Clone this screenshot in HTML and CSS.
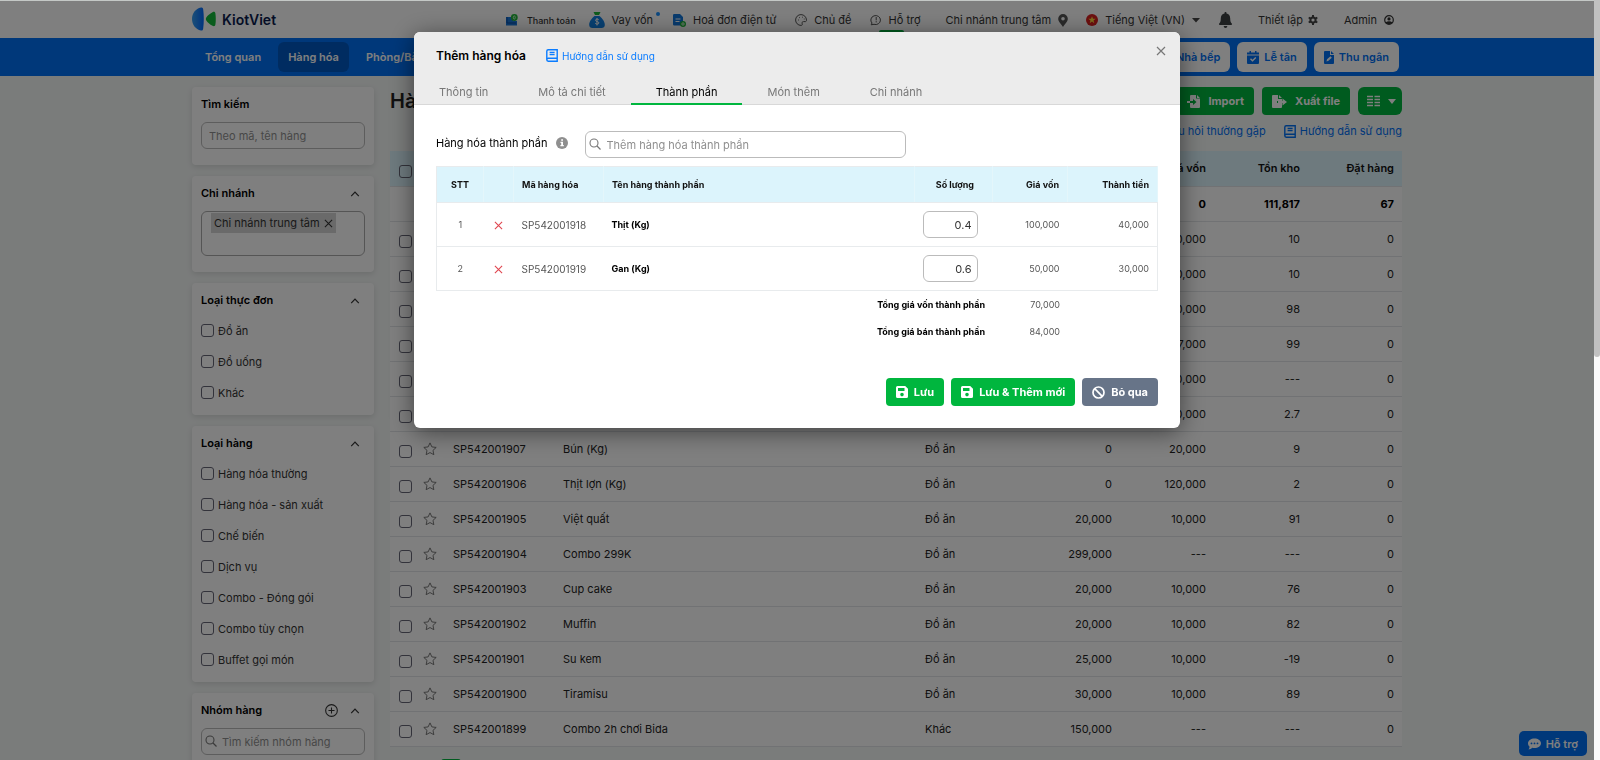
FILE: index.html
```html
<!DOCTYPE html>
<html lang="vi">
<head>
<meta charset="UTF-8">
<meta name="viewport" content="width=device-width, initial-scale=1.0">
<title>KiotViet - Hàng hóa</title>
<link rel="stylesheet" href="styles.css">
</head>
<body>

<!-- shared icons -->
<svg class="sprite" aria-hidden="true">
  <symbol id="i-star" viewBox="0 0 24 24"><path d="M12 1.5l3.2 6.9 7.4.9-5.5 5.1 1.5 7.4L12 18.1l-6.6 3.7 1.5-7.4L1.4 9.300l7.400-.9z" fill="none" stroke="currentColor" stroke-width="1.700" stroke-linejoin="round"/></symbol>
  <symbol id="i-up" viewBox="0 0 10 10"><path d="M1.200 7.200L5 3.200l3.800 4" fill="none" stroke="currentColor" stroke-width="1.200"/></symbol>
  <symbol id="i-x" viewBox="0 0 10 10"><path d="M1 1l8 8M9 1L1 9" fill="none" stroke="currentColor" stroke-width="1.200"/></symbol>
  <symbol id="i-search" viewBox="0 0 12 12"><circle cx="5" cy="5" r="4" fill="none" stroke="currentColor" stroke-width="1.100"/><path d="M8 8l3.500 3.500" stroke="currentColor" stroke-width="1.300"/></symbol>
  <symbol id="i-book" viewBox="0 0 12 13"><path d="M2.200.8h9v11.400h-9A1.400 1.400 0 0 1 .8 10.800V2.200A1.400 1.400 0 0 1 2.200.8zM.8 10.600a1.400 1.400 0 0 1 1.400-1.300h9M3.600 3.500h5M3.600 5.600h5" fill="none" stroke="currentColor" stroke-width="1.400"/></symbol>
  <symbol id="i-save" viewBox="0 0 12 12"><path fill="currentColor" fill-rule="evenodd" d="M1.500 0h7.700L12 2.800v7.700a1.500 1.500 0 0 1-1.500 1.500h-9A1.500 1.500 0 0 1 0 10.500v-9A1.500 1.500 0 0 1 1.500 0zM2 2v3h6.500V2zM6 6.800a1.800 1.800 0 1 0 0 3.600 1.800 1.800 0 0 0 0-3.600z"/></symbol>
</svg>

<div class="page">
  <header class="topbar">
    <div class="wrap topbar-inner">
      <a class="logo" href="#">
        <svg width="24" height="24" viewBox="0 0 24 24">
          <defs><linearGradient id="lg" x1="0" x2="1"><stop offset="0" stop-color="#3aa0f0"/><stop offset="1" stop-color="#0068ff"/></linearGradient></defs>
          <path d="M9 .5c1.500-.3 2 .5 2.200 2 .8 6 .8 13 0 19-.2 1.500-.7 2.300-2.200 2C3.500 22.500 0 17.500 0 12S3.500 1.500 9 .5z" fill="url(#lg)"/>
          <path d="M20.500 5.200c1.600-.8 2.700-.2 2.900 1.200.5 3.500.5 7.700 0 11.200-.2 1.400-1.300 2-2.900 1.200-2.700-1.400-5-3.300-6.200-5.300-.6-1-.6-2 0-3 1.200-2 3.500-3.900 6.200-5.300z" fill="#12b83a"/>
        </svg>
        <span>KiotViet</span>
      </a>
      <div class="top-links">
        <div class="top-group group-apps">
          <a class="small" href="#">
            <svg width="12" height="12" viewBox="0 0 12 12"><path d="M0 3h7v4h4v4.500H0z" fill="#1a7be0"/><path d="M1 3v6h9" stroke="#0b4fa8" fill="none"/><circle cx="8.300" cy="3.500" r="3.400" fill="#1fb83a"/><ellipse cx="8.300" cy="3.500" rx="1" ry="1.600" fill="none" stroke="#e0ffe5" stroke-width=".8"/></svg>
            Thanh toán
          </a>
          <a href="#">
            <svg width="16" height="16" viewBox="0 0 16 16"><path d="M4.500 0h7L10 3H6z" fill="#1fb83a"/><path d="M5.500 4h5c3 2.500 5.500 6 5.300 9 0 2-1.300 3-3.300 3h-9c-2 0-3.300-1-3.300-3C0 10 2.500 6.500 5.500 4z" fill="#1182e6"/><path d="M9.800 7.800C9.400 6.900 6.500 6.700 6.500 8.300c0 1.700 3.400.8 3.400 2.600 0 1.600-3.200 1.500-3.700.4M8 6v7.500" stroke="#fff" fill="none"/></svg>
            Vay vốn<i class="dot"></i>
          </a>
          <a href="#">
            <svg width="13" height="13" viewBox="0 0 13 13"><path d="M1.500 0h5.500l3 3v8.500H1.500A1.300 1.300 0 0 1 0 10.300V1.300A1.300 1.300 0 0 1 1.500 0z" fill="#1277dd"/><path d="M2.500 5h5M2.500 7.500h4" stroke="#fff"/><circle cx="10" cy="10" r="3" fill="#1fb83a"/><circle cx="10" cy="10" r="1.200" fill="none" stroke="#fff" stroke-width=".8"/></svg>
            Hoá đơn điện tử
          </a>
        </div>
        <div class="top-group">
          <a href="#">
            <svg width="12" height="12" viewBox="0 0 12 12" fill="none" stroke="#555"><path d="M6 .6a5.400 5.400 0 1 0 0 10.800c1.300 0 1.500-.8 1.200-1.600C6.700 8.500 7.300 7.600 8.500 7.600h1.800c.8 0 1.200-.6 1.200-1.500C11.400 3 9 .6 6 .6z"/><path d="M3 6h.8M4 3.600h.8M7 3.200h.8M8.800 5h.8"/></svg>
            Chủ đề
          </a>
          <a href="#">
            <svg width="12" height="12" viewBox="0 0 12 12" fill="none" stroke="#555"><path d="M1.200 10.800L2 9A4.800 4.500 0 1 1 4 10.300z"/><path d="M6.200 3v3.300M6.200 7.200v1.200"/></svg>
            Hỗ trợ<i class="tag"></i>
          </a>
          <a href="#">
            Chi nhánh trung tâm
            <svg width="10" height="13" viewBox="0 0 10 13"><path fill="#555" fill-rule="evenodd" d="M5 0a4.800 4.800 0 0 1 4.800 4.800C9.800 8 6.500 10.500 5 13 3.500 10.500.2 8 .2 4.800A4.800 4.800 0 0 1 5 0zm0 3a1.800 1.800 0 1 0 0 3.600A1.800 1.800 0 0 0 5 3z"/></svg>
          </a>
          <a href="#">
            <svg width="12" height="12" viewBox="0 0 12 12"><circle cx="6" cy="6" r="6" fill="#da1f1f"/><path d="M6 2.200l1 2.600h2.700L7.500 6.500l.8 2.700L6 7.600 3.700 9.200l.8-2.700-2.200-1.700H5z" fill="#ffd93b"/></svg>
            Tiếng Việt (VN)
            <svg class="lang-caret" width="8" height="5" viewBox="0 0 8 5"><path d="M0 0h8L4 4.500z" fill="#444"/></svg>
          </a>
        </div>
        <div class="top-group group-user">
          <a href="#" aria-label="Thông báo">
            <svg width="13" height="16" viewBox="0 0 13 16"><path d="M6.500 0c.6 0 1 .4 1 1v.6c2.200.4 3.700 2.300 3.700 4.600 0 3 .6 4.300 1.600 5.300.4.500.1 1.500-.7 1.500H.9c-.8 0-1.100-1-.7-1.500 1-1 1.600-2.300 1.600-5.300 0-2.300 1.500-4.200 3.700-4.600V1c0-.6.4-1 1-1zM4.700 14h3.600c0 1-.8 2-1.800 2s-1.800-1-1.800-2z" fill="#3c4043"/></svg>
          </a>
          <a class="setup" href="#">
            Thiết lập
            <svg width="10" height="10" viewBox="0 0 10 10"><circle cx="5" cy="5" r="2.600" fill="none" stroke="#444" stroke-width="2"/><path d="M5 0v2M5 8v2M.7 2.500l1.700 1M7.600 6.500l1.700 1M.7 7.500l1.700-1M7.600 3.500l1.700-1" stroke="#444" stroke-width="2"/></svg>
          </a>
          <a href="#">
            Admin
            <svg width="10" height="10" viewBox="0 0 10 10"><circle cx="5" cy="5" r="4.300" fill="none" stroke="#333" stroke-width="1.200"/><circle cx="5" cy="3.900" r="1.600" fill="#333"/><path d="M1.500 7.500c2-1.700 5-1.700 7 0C7 9.500 3 9.500 1.500 7.500z" fill="#333"/></svg>
          </a>
        </div>
      </div>
    </div>
  </header>

  <nav class="navbar">
    <div class="wrap navbar-inner">
      <div class="nav-items">
        <a href="#">Tổng quan</a>
        <a class="active" href="#">Hàng hóa</a>
        <a href="#">Phòng/Bàn</a>
        <a href="#">Giao dịch</a>
      </div>
      <div class="nav-items">
        <button class="nav-btn" type="button">Nhà bếp</button>
        <button class="nav-btn" type="button">
          <svg width="12" height="13" viewBox="0 0 12 13"><path fill="currentColor" fill-rule="evenodd" d="M2.500 0h1.500v1.500h4V0h1.500v1.500H12v2H0v-2h2.500zM0 4.500h12V12a1 1 0 0 1-1 1H1a1 1 0 0 1-1-1zm3 3.700l2.500 2.600 3.800-3.800-1-1-2.800 2.800L4 7.200z"/></svg>
          Lễ tân
        </button>
        <button class="nav-btn" type="button">
          <svg width="10" height="13" viewBox="0 0 10 13"><path fill="currentColor" fill-rule="evenodd" d="M1 0h5v4h4v8a1 1 0 0 1-1 1H1a1 1 0 0 1-1-1V1a1 1 0 0 1 1-1zm6 0l3 3H7zM2.500 10.500L3 8.300l3.500-3 1.300 1.500-3.300 3z"/></svg>
          Thu ngân
        </button>
      </div>
    </div>
  </nav>

  <div class="wrap content">
    <aside class="sidebar">
      <section class="card">
        <h3><label for="keyword">Tìm kiếm</label></h3>
        <input class="field side-field" type="text" id="keyword" placeholder="Theo mã, tên hàng">
      </section>

      <section class="card">
        <h3>Chi nhánh <svg class="up"><use href="#i-up"/></svg></h3>
        <div class="chip-box"><span class="chip">Chi nhánh trung tâm <svg width="9" height="9"><use href="#i-x"/></svg></span></div>
      </section>

      <section class="card checks">
        <h3>Loại thực đơn <svg class="up"><use href="#i-up"/></svg></h3>
        <label><input type="checkbox"> Đồ ăn</label>
        <label><input type="checkbox"> Đồ uống</label>
        <label><input type="checkbox"> Khác</label>
      </section>

      <section class="card checks">
        <h3>Loại hàng <svg class="up"><use href="#i-up"/></svg></h3>
        <label><input type="checkbox"> Hàng hóa thường</label>
        <label><input type="checkbox"> Hàng hóa - sản xuất</label>
        <label><input type="checkbox"> Chế biến</label>
        <label><input type="checkbox"> Dịch vụ</label>
        <label><input type="checkbox"> Combo - Đóng gói</label>
        <label><input type="checkbox"> Combo tùy chọn</label>
        <label><input type="checkbox"> Buffet gọi món</label>
      </section>

      <section class="card">
        <h3><label for="group">Nhóm hàng</label>
          <svg class="plus" viewBox="0 0 12 12"><circle cx="6" cy="6" r="5.400" fill="none" stroke="currentColor"/><path d="M6 3.200v5.600M3.200 6h5.600" stroke="currentColor"/></svg>
          <svg class="up"><use href="#i-up"/></svg>
        </h3>
        <div class="search-box">
          <svg width="12" height="12"><use href="#i-search"/></svg>
          <input class="field side-field" type="text" id="group" placeholder="Tìm kiếm nhóm hàng">
        </div>
      </section>
    </aside>

    <main class="main">
      <div class="main-head">
        <h1>Hàng hóa</h1>
        <div class="actions">
          <button class="btn green" type="button">
            <svg width="13" height="13" viewBox="0 0 13 13"><path fill="currentColor" fill-rule="evenodd" d="M4 0h5v3.500h4V12a1 1 0 0 1-1 1H4a1 1 0 0 1-1-1V8h3v2l3.500-3L6 4v2H3V1a1 1 0 0 1 1-1zm6 0l3 3h-3zM0 6h3v2H0z"/></svg>
            Import
          </button>
          <button class="btn green" type="button">
            <svg width="15" height="13" viewBox="0 0 15 13"><path fill="currentColor" d="M1 0h5v4h4v2H5v2h5v4a1 1 0 0 1-1 1H1a1 1 0 0 1-1-1V1a1 1 0 0 1 1-1zm6 0l3 3H7zM10.500 3.500L15 7l-4.500 3.500V8H6V6h4.500z"/></svg>
            Xuất file
          </button>
          <button class="btn green columns" type="button" aria-label="Cột hiển thị">
            <svg width="13" height="12" viewBox="0 0 13 12"><path d="M0 1.500h6M0 4.500h6M0 7.500h6M0 10.500h6M7.500 1.500h5.500M7.500 4.500h5.500M7.500 7.500h5.500M7.500 10.500h5.500" stroke="currentColor" stroke-width="1.500"/></svg>
            <svg width="8" height="5" viewBox="0 0 8 5"><path d="M0 0h8L4 5z" fill="currentColor"/></svg>
          </button>
        </div>
      </div>
      <div class="help-links">
        <a href="#">Câu hỏi thường gặp</a>
        <a href="#"><svg width="12" height="13"><use href="#i-book"/></svg>Hướng dẫn sử dụng</a>
      </div>

      <table class="products">
        <colgroup>
          <col class="c-check"><col class="c-star"><col class="c-code"><col class="c-name"><col class="c-type"><col class="c-price"><col class="c-num"><col class="c-num"><col class="c-num">
        </colgroup>
        <thead>
          <tr><th><input type="checkbox" aria-label="Chọn tất cả"></th><th></th><th>Mã hàng</th><th>Tên hàng</th><th>Loại thực đơn</th><th>Giá bán</th><th>Giá vốn</th><th>Tồn kho</th><th>Đặt hàng</th></tr>
        </thead>
        <tbody>
          <tr class="sum"><td></td><td></td><td></td><td></td><td></td><td></td><td>0</td><td>111,817</td><td>67</td></tr>
          <tr><td><input type="checkbox" aria-label="SP542001913"></td><td><svg class="star"><use href="#i-star"/></svg></td><td>SP542001913</td><td>Bánh mì</td><td>Đồ ăn</td><td>30,000</td><td>10,000</td><td>10</td><td>0</td></tr>
          <tr><td><input type="checkbox" aria-label="SP542001912"></td><td><svg class="star"><use href="#i-star"/></svg></td><td>SP542001912</td><td>Bánh cuốn</td><td>Đồ ăn</td><td>30,000</td><td>10,000</td><td>10</td><td>0</td></tr>
          <tr><td><input type="checkbox" aria-label="SP542001911"></td><td><svg class="star"><use href="#i-star"/></svg></td><td>SP542001911</td><td>Trà đào</td><td>Đồ uống</td><td>30,000</td><td>10,000</td><td>98</td><td>0</td></tr>
          <tr><td><input type="checkbox" aria-label="SP542001910"></td><td><svg class="star"><use href="#i-star"/></svg></td><td>SP542001910</td><td>Trà chanh</td><td>Đồ uống</td><td>20,000</td><td>7,000</td><td>99</td><td>0</td></tr>
          <tr><td><input type="checkbox" aria-label="SP542001909"></td><td><svg class="star"><use href="#i-star"/></svg></td><td>SP542001909</td><td>Bún chả</td><td>Đồ ăn</td><td>50,000</td><td>30,000</td><td>---</td><td>0</td></tr>
          <tr><td><input type="checkbox" aria-label="SP542001908"></td><td><svg class="star"><use href="#i-star"/></svg></td><td>SP542001908</td><td>Chả (Kg)</td><td>Đồ ăn</td><td>0</td><td>100,000</td><td>2.7</td><td>0</td></tr>
          <tr><td><input type="checkbox" aria-label="SP542001907"></td><td><svg class="star"><use href="#i-star"/></svg></td><td>SP542001907</td><td>Bún (Kg)</td><td>Đồ ăn</td><td>0</td><td>20,000</td><td>9</td><td>0</td></tr>
          <tr><td><input type="checkbox" aria-label="SP542001906"></td><td><svg class="star"><use href="#i-star"/></svg></td><td>SP542001906</td><td>Thịt lợn (Kg)</td><td>Đồ ăn</td><td>0</td><td>120,000</td><td>2</td><td>0</td></tr>
          <tr><td><input type="checkbox" aria-label="SP542001905"></td><td><svg class="star"><use href="#i-star"/></svg></td><td>SP542001905</td><td>Việt quất</td><td>Đồ ăn</td><td>20,000</td><td>10,000</td><td>91</td><td>0</td></tr>
          <tr><td><input type="checkbox" aria-label="SP542001904"></td><td><svg class="star"><use href="#i-star"/></svg></td><td>SP542001904</td><td>Combo 299K</td><td>Đồ ăn</td><td>299,000</td><td>---</td><td>---</td><td>0</td></tr>
          <tr><td><input type="checkbox" aria-label="SP542001903"></td><td><svg class="star"><use href="#i-star"/></svg></td><td>SP542001903</td><td>Cup cake</td><td>Đồ ăn</td><td>20,000</td><td>10,000</td><td>76</td><td>0</td></tr>
          <tr><td><input type="checkbox" aria-label="SP542001902"></td><td><svg class="star"><use href="#i-star"/></svg></td><td>SP542001902</td><td>Muffin</td><td>Đồ ăn</td><td>20,000</td><td>10,000</td><td>82</td><td>0</td></tr>
          <tr><td><input type="checkbox" aria-label="SP542001901"></td><td><svg class="star"><use href="#i-star"/></svg></td><td>SP542001901</td><td>Su kem</td><td>Đồ ăn</td><td>25,000</td><td>10,000</td><td>-19</td><td>0</td></tr>
          <tr><td><input type="checkbox" aria-label="SP542001900"></td><td><svg class="star"><use href="#i-star"/></svg></td><td>SP542001900</td><td>Tiramisu</td><td>Đồ ăn</td><td>30,000</td><td>10,000</td><td>89</td><td>0</td></tr>
          <tr><td><input type="checkbox" aria-label="SP542001899"></td><td><svg class="star"><use href="#i-star"/></svg></td><td>SP542001899</td><td>Combo 2h chơi Bida</td><td>Khác</td><td>150,000</td><td>---</td><td>---</td><td>0</td></tr>
        </tbody>
      </table>
      <div class="pager"><span class="pager-current"></span></div>
    </main>
  </div>

  <button class="support" type="button">
    <svg width="13" height="12" viewBox="0 0 13 12"><path fill="currentColor" fill-rule="evenodd" d="M6.500 0.500C10 .5 13 2.600 13 5.300s-3 4.800-6.500 4.800c-.8 0-1.600-.1-2.300-.3C3.300 10.800 1.800 11.500.5 11.500c.6-.7 1-1.600 1.100-2.700C.6 7.900 0 6.700 0 5.300 0 2.600 3 .5 6.500.5zM3.500 4.500a.9.9 0 1 0 0 1.800.9.900 0 0 0 0-1.800zm3 0a.9.900 0 1 0 0 1.800.9.900 0 0 0 0-1.800zm3 0a.9.900 0 1 0 0 1.800.9.900 0 0 0 0-1.800z"/></svg>
    Hỗ trợ
  </button>
</div>

<div class="overlay">
  <div class="modal" role="dialog" aria-labelledby="modalTitle">
    <div class="modal-head">
      <div class="modal-title">
        <h2 id="modalTitle">Thêm hàng hóa</h2>
        <a href="#"><svg width="12" height="13"><use href="#i-book"/></svg>Hướng dẫn sử dụng</a>
        <button class="close" type="button" aria-label="Đóng"><svg width="10" height="10"><use href="#i-x"/></svg></button>
      </div>
      <div class="tabs">
        <a href="#">Thông tin</a>
        <a href="#">Mô tả chi tiết</a>
        <a class="active" href="#">Thành phần</a>
        <a href="#">Món thêm</a>
        <a href="#">Chi nhánh</a>
      </div>
    </div>

    <div class="modal-body">
      <div class="add-row">
        <div class="add-label">
          <label for="component">Hàng hóa thành phần</label>
          <svg width="12" height="12" viewBox="0 0 12 12"><circle cx="6" cy="6" r="6" fill="#8f8f8f"/><path d="M5.200 2.300h1.800v1.500H5.200zM4.500 4.800H7v3.300h.8v1.100H4.400V8.100h.8V5.900h-.7z" fill="#fff"/></svg>
        </div>
        <div class="search-box">
          <svg width="12" height="12"><use href="#i-search"/></svg>
          <input class="field" type="text" id="component" placeholder="Thêm hàng hóa thành phần">
        </div>
      </div>

      <table class="parts">
        <colgroup><col class="p-stt"><col class="p-del"><col class="p-code"><col class="p-name"><col class="p-qty"><col class="p-cost"><col class="p-total"></colgroup>
        <thead>
          <tr><th>STT</th><th></th><th>Mã hàng hóa</th><th>Tên hàng thành phần</th><th>Số lượng</th><th>Giá vốn</th><th>Thành tiền</th></tr>
        </thead>
        <tbody>
          <tr><td>1</td><td><button class="del" type="button" aria-label="Xóa"><svg width="9" height="9"><use href="#i-x"/></svg></button></td><td class="code">SP542001918</td><td>Thịt (Kg)</td><td><input class="field qty" type="text" value="0.4" aria-label="Số lượng Thịt"></td><td>100,000</td><td>40,000</td></tr>
          <tr><td>2</td><td><button class="del" type="button" aria-label="Xóa"><svg width="9" height="9"><use href="#i-x"/></svg></button></td><td class="code">SP542001919</td><td>Gan (Kg)</td><td><input class="field qty" type="text" value="0.6" aria-label="Số lượng Gan"></td><td>50,000</td><td>30,000</td></tr>
        </tbody>
      </table>

      <dl class="totals">
        <dt>Tổng giá vốn thành phần</dt><dd>70,000</dd>
        <dt>Tổng giá bán thành phần</dt><dd>84,000</dd>
      </dl>

      <div class="modal-foot">
        <button class="btn green" type="button"><svg width="12" height="12"><use href="#i-save"/></svg>Lưu</button>
        <button class="btn green" type="button"><svg width="12" height="12"><use href="#i-save"/></svg>Lưu &amp; Thêm mới</button>
        <button class="btn gray" type="button"><svg width="13" height="13" viewBox="0 0 13 13"><circle cx="6.500" cy="6.500" r="5.500" fill="none" stroke="currentColor" stroke-width="1.700"/><path d="M2.700 2.700l7.600 7.600" stroke="currentColor" stroke-width="1.700"/></svg>Bỏ qua</button>
      </div>
    </div>
  </div>
</div>

<div class="scrollbar"><div class="thumb"></div></div>

</body>
</html>
```
FILE: styles.css
```css
* {
  box-sizing: border-box;
}

body {
  margin: 0;
  height: 100vh;
  overflow: hidden;
  font-family: Inter, "Noto Sans", sans-serif;
  font-size: 11px;
  color: #333;
  background-color: #f5f8f7;
}

button,
input {
  font-family: inherit;
}

button {
  border: 0;
  cursor: pointer;
}

a {
  color: inherit;
  text-decoration: none;
}

svg {
  flex: none;
}

.sprite {
  position: absolute;
  width: 0;
  height: 0;
}

.page {
  height: 100vh;
  margin-right: 6px;
  overflow: hidden;
}

.wrap {
  max-width: 1210px;
  margin: 0 auto;
}

/* top bar */
.topbar {
  background-color: #fff;
}

.topbar-inner {
  display: flex;
  align-items: center;
  justify-content: space-between;
  height: 38px;
}

.logo {
  display: flex;
  align-items: center;
  gap: 6px;
  font-size: 14px;
  font-weight: 600;
  color: #0b1b4d;
}

.top-links,
.top-group,
.top-group a {
  display: flex;
  align-items: center;
}

.top-links {
  gap: 19px;
  padding: 2px 8px 0 0;
}

.top-group {
  gap: 18px;
}

.group-apps {
  gap: 13px;
}

.group-user {
  gap: 26px;
}

.top-group a {
  position: relative;
  gap: 7px;
}

.top-group .small {
  gap: 9px;
  font-size: 9px;
  font-weight: 500;
}

.top-group .setup {
  gap: 5px;
}

.dot {
  align-self: flex-start;
  width: 4px;
  height: 4px;
  margin-left: -4px;
  border-radius: 50%;
  background-color: #1890ff;
}

.tag {
  position: absolute;
  top: 17px;
  left: 9px;
  width: 25px;
  height: 10px;
  border-radius: 2px;
  background-color: #00b63e;
}

/* blue nav */
.navbar {
  background-color: #0070f4;
}

.navbar-inner,
.nav-items {
  display: flex;
  align-items: center;
}

.navbar-inner {
  justify-content: space-between;
  height: 38px;
  padding: 0 3px;
}

.nav-items {
  gap: 7px;
}

.nav-items a,
.nav-btn {
  display: flex;
  align-items: center;
  gap: 5px;
  height: 30px;
  padding: 0 10px;
  border-radius: 6px;
  font-size: 11px;
  font-weight: 600;
  color: #fff;
}

.nav-items a.active {
  background-color: #0059c2;
}

.nav-btn {
  background-color: #fff;
  color: #0070f4;
}

/* layout */
.content {
  display: grid;
  grid-template-columns: 182px 1fr;
  gap: 16px;
  padding-top: 11px;
}

.sidebar {
  display: flex;
  flex-direction: column;
  gap: 11px;
}

.card {
  padding: 10px 9px 16px;
  border-radius: 4px;
  background-color: #fff;
  box-shadow: 0 2px 6px rgba(0, 0, 0, 0.12);
}

.card h3 {
  display: flex;
  align-items: center;
  gap: 12px;
  margin: 0 5px 10px 0;
  font-size: 11px;
  line-height: 15px;
  font-weight: 600;
  color: #000;
}

.card h3 svg {
  color: #333;
}

.up {
  width: 10px;
  height: 10px;
  margin-left: auto;
}

.plus {
  width: 13px;
  height: 13px;
  margin-left: auto;
}

.plus + .up {
  margin-left: 0;
}

.field {
  width: 100%;
  height: 27px;
  padding: 0 7px;
  border: 1px solid #bbb;
  border-radius: 6px;
  background-color: #fff;
  font-size: 11px;
  color: #333;
}

.field::placeholder {
  color: #8f8f8f;
}

.search-box {
  position: relative;
  color: #777;
}

.search-box svg {
  position: absolute;
  top: 7px;
  left: 4px;
}

.search-box .field {
  padding-left: 20px;
}

.chip-box {
  height: 45px;
  padding: 1px 9px;
  border: 1px solid #aaa;
  border-radius: 6px;
}

.chip {
  display: inline-flex;
  align-items: center;
  gap: 4px;
  height: 20px;
  padding: 0 3px;
  background-color: #d5d5d5;
}

.checks {
  padding-bottom: 7px;
}

.checks h3 {
  margin-bottom: 7px;
}

.checks label {
  display: flex;
  align-items: center;
  gap: 4px;
  height: 31px;
}

input[type="checkbox"] {
  appearance: none;
  flex: none;
  width: 13px;
  height: 13px;
  margin: 0;
  border: 1px solid #667;
  border-radius: 3px;
}

/* product list */
.main-head {
  display: flex;
  align-items: center;
  justify-content: space-between;
}

.main-head h1 {
  margin: 0;
  font-size: 20px;
  line-height: 28px;
  font-weight: 600;
  color: #222;
}

.actions {
  display: flex;
  gap: 8px;
}

.btn {
  display: flex;
  align-items: center;
  gap: 6px;
  height: 28px;
  padding: 0 10px;
  border-radius: 4px;
  font-size: 11px;
  font-weight: 700;
  color: #fff;
}

.actions .btn {
  gap: 8px;
}

.green {
  background-color: #00b63e;
}

.gray {
  background-color: #677488;
}

.actions .columns {
  width: 44px;
  padding: 0 9px;
  border-radius: 6px;
}

.help-links {
  display: flex;
  justify-content: flex-end;
  gap: 18px;
  padding: 8px 0 12px;
  line-height: 16px;
  color: #0070f4;
}

.help-links a,
.modal-title a {
  display: flex;
  align-items: center;
  gap: 4px;
}

table {
  width: 100%;
  border-collapse: collapse;
  table-layout: fixed;
}

.products {
  background-color: #fff;
  color: #222;
}

.products th,
.products td {
  height: 35px;
  padding: 0 8px;
  border-bottom: 1px solid #e2e5e8;
  text-align: left;
}

.products th {
  background-color: #dcf4fc;
  font-weight: 600;
  color: #111;
}

.products th:nth-child(n+6),
.products td:nth-child(n+6) {
  text-align: right;
}

.products th:first-child,
.products td:first-child {
  padding: 6px 0 0 9px;
}

.products input,
.star {
  display: block;
}

.star {
  width: 14px;
  height: 14px;
  color: #777;
}

.products .sum td {
  font-weight: 700;
  color: #000;
}

.c-check { width: 25px; }
.c-star { width: 30px; }
.c-code { width: 110px; }
.c-type { width: 103px; }
.c-price { width: 100px; }
.c-num { width: 94px; }

.pager {
  display: flex;
  padding: 12px 51px;
}

.pager-current {
  width: 20px;
  height: 20px;
  border-radius: 3px;
  background-color: #00b63e;
}

.support {
  position: fixed;
  right: 13px;
  bottom: 4px;
  display: flex;
  align-items: center;
  gap: 5px;
  height: 25px;
  padding: 0 9px;
  border-radius: 5px;
  background-color: #0070f4;
  font-size: 11px;
  font-weight: 600;
  color: #fff;
}

/* add product window */
.overlay {
  position: fixed;
  inset: 0 6px 0 0;
  padding-top: 31px;
  border-top: 1px solid #c4c8c6;
  background-color: rgba(0, 0, 0, 0.5);
}

.modal {
  max-width: 766px;
  margin: 0 auto;
  overflow: hidden;
  border-radius: 6px;
  background-color: #fff;
  box-shadow: 0 4px 24px rgba(0, 0, 0, 0.5);
}

.modal-head {
  border-bottom: 1px solid #d8d8d8;
  background-color: #ececec;
}

.modal-title {
  display: flex;
  align-items: center;
  height: 47px;
  padding: 0 14px 0 22px;
}

.modal-title h2 {
  margin: 0 20px 0 0;
  font-size: 12px;
  font-weight: 600;
  color: #000;
}

.modal-title a {
  font-size: 10px;
  color: #0a7cff;
}

.close {
  display: flex;
  height: 20px;
  margin: 0 0 9px auto;
  padding: 5px 0;
  background: none;
  color: #777;
}

.tabs {
  display: flex;
  color: #777;
}

.tabs a {
  height: 25px;
  padding: 0 25px;
  line-height: 27px;
}

.tabs .active {
  height: 26px;
  margin-bottom: -1px;
  border-bottom: 2px solid #00b63e;
  color: #000;
}

.modal-body {
  padding: 26px 22px 22px;
}

.add-row {
  display: flex;
  align-items: flex-start;
  color: #000;
}

.add-label {
  display: flex;
  align-items: center;
  gap: 9px;
  height: 23px;
}

.add-row .search-box {
  width: 321px;
  margin-left: 17px;
}

.parts {
  margin-top: 8px;
  border: 1px solid #e8ebed;
  font-size: 9px;
  color: #555;
}

.parts th,
.parts td {
  height: 44px;
  padding: 0 8px;
  border-bottom: 1px solid #e8ebed;
  text-align: left;
}

.parts th {
  height: 36px;
  border-right: 1px solid #e4f6fb;
  background-color: #dcf4fc;
  font-weight: 700;
  color: #111;
}

.parts th:nth-child(-n+2),
.parts td:nth-child(-n+2) {
  text-align: center;
}

.parts .code {
  font-size: 10px;
}

.parts td:nth-child(4) {
  font-weight: 700;
  color: #000;
}

.parts th:nth-child(n+5),
.parts td:nth-child(n+5) {
  text-align: right;
}

.parts th:nth-child(5) {
  padding-right: 18px;
}

.parts td:nth-child(5) {
  padding-right: 15px;
}

.p-stt { width: 47px; }
.p-del { width: 30px; }
.p-code { width: 90px; }
.p-qty { width: 78px; }
.p-cost { width: 75px; }
.p-total { width: 90px; }

.del {
  padding: 0;
  background: none;
  color: #e0454f;
}

.parts .qty {
  width: 55px;
  padding: 0 5px;
  text-align: right;
}

.totals {
  display: grid;
  grid-template-columns: 1fr 75px;
  margin: 0 98px 0 0;
  font-size: 9px;
  line-height: 27px;
  text-align: right;
}

.totals dt {
  font-weight: 700;
  color: #000;
}

.totals dd {
  margin: 0;
  color: #555;
}

.modal-foot {
  display: flex;
  justify-content: flex-end;
  gap: 7px;
  margin-top: 33px;
}

.scrollbar {
  position: fixed;
  top: 0;
  right: 0;
  bottom: 0;
  width: 6px;
  background-color: #fafafa;
}

.thumb {
  height: 47%;
  border-radius: 0 0 3px 3px;
  background-color: #c1c1c1;
}
```
